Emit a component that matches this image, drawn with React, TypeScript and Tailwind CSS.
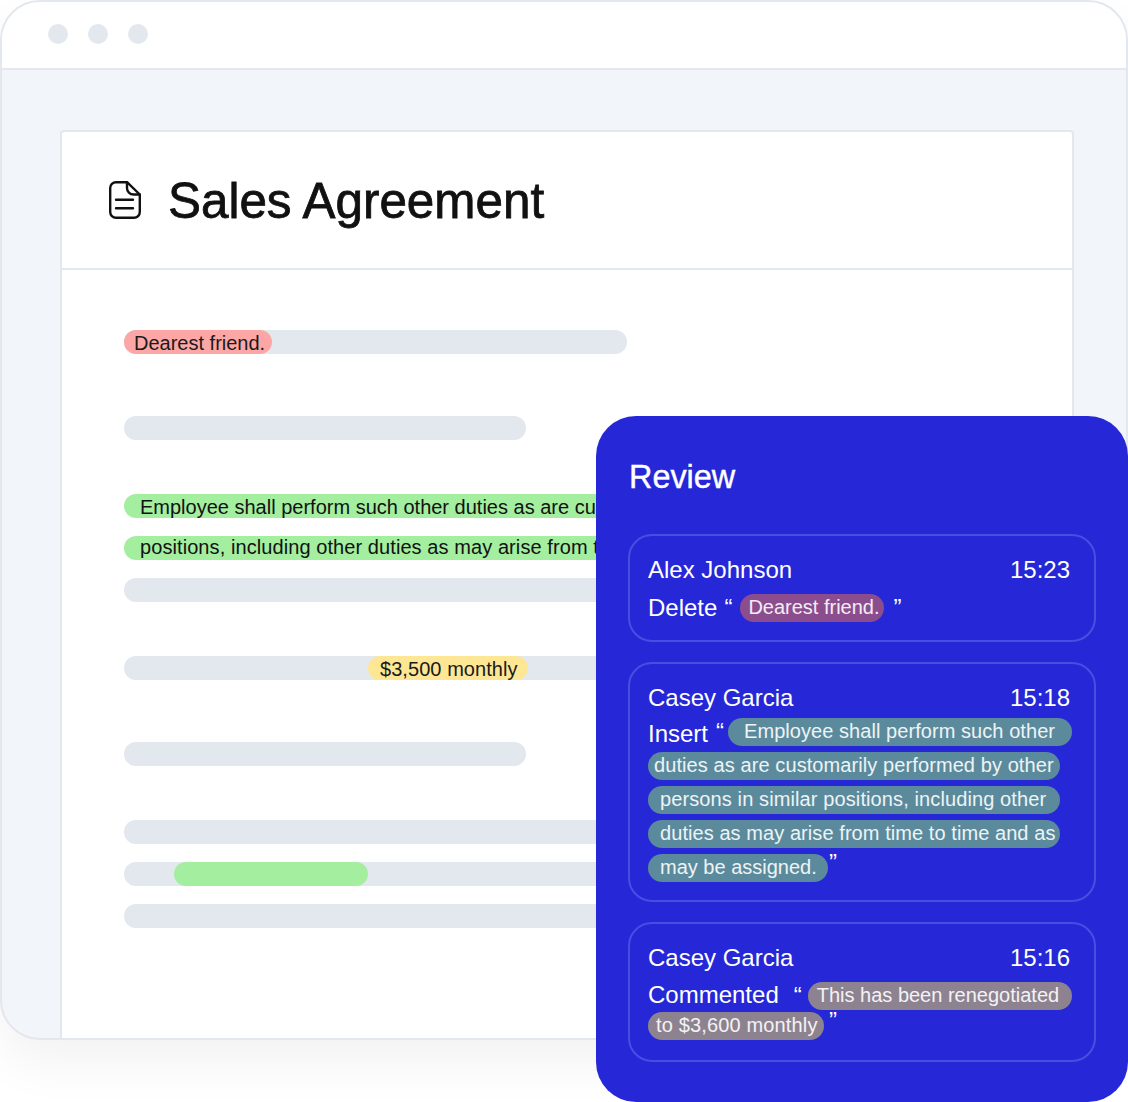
const font = "font-['Liberation_Sans',Arial,sans-serif]";

const DocIcon = () => (
  <svg width="32" height="38" viewBox="0 0 32 38" fill="none" stroke="#111111" strokeWidth="2.4" strokeLinejoin="round" strokeLinecap="round">
    <path d="M18 1.2H7A5.8 5.8 0 0 0 1.2 7V31A5.8 5.8 0 0 0 7 36.8H25A5.8 5.8 0 0 0 30.8 31V13.5L18 1.2Z" />
    <path d="M18 1.2V7A6.5 6.5 0 0 0 24.5 13.5H30.8" />
    <path d="M7 18.7H24M7 27.3H24" />
  </svg>
);

const Bar = ({ className = "", children }: { className?: string; children?: React.ReactNode }) => (
  <div className={`h-6 rounded-full bg-[#e3e7ee] flex ${className}`}>{children}</div>
);

const GreenLine = ({ className, text }: { className: string; text: string }) => (
  <div className={`h-6 rounded-full bg-[#a4ee9f] pl-4 text-[20px] text-[#111111] whitespace-nowrap overflow-hidden ${className}`}>
    {text}
  </div>
);

const Pill = ({ className, children }: { className: string; children: React.ReactNode }) => (
  <div className={`h-7 rounded-full text-[20px] leading-[26px] text-white/90 whitespace-nowrap shrink-0 ${className}`}>{children}</div>
);

const CardHead = ({ name, time }: { name: string; time: string }) => (
  <div className="flex justify-between pr-[6px] text-[24px] leading-7 text-white">
    <span>{name}</span>
    <span>{time}</span>
  </div>
);

const Card = ({ className = "pb-[18px]", children }: { className?: string; children: React.ReactNode }) => (
  <div className={`rounded-[24px] border-2 border-[#4a4ee0] px-[18px] pt-5 ${className}`}>{children}</div>
);

export default function App() {
  return (
    <div className={`relative h-[1102px] w-[1128px] overflow-hidden bg-white ${font}`}>
      <div className="flex h-[1040px] flex-col overflow-hidden rounded-[40px] border-2 border-[#e3e7ee] bg-[#f2f6fa] shadow-[0_24px_50px_rgba(0,0,0,0.05)]">
        <div className="flex h-[68px] shrink-0 items-center gap-5 border-b-2 border-[#e3e7ee] bg-white pl-[46px] pb-[2px]">
          <span className="h-5 w-5 rounded-full bg-[#e3e7ee]" />
          <span className="h-5 w-5 rounded-full bg-[#e3e7ee]" />
          <span className="h-5 w-5 rounded-full bg-[#e3e7ee]" />
        </div>
        <div className="flex-1 pl-[58px] pr-[52px] pt-[60px]">
          <div className="h-[1000px] rounded-[4px] border-2 border-[#e3e7ee] bg-white">
            <div className="flex h-[138px] items-center gap-[27px] border-b-2 border-[#e3e7ee] pl-[47px]">
              <DocIcon />
              <h1 className="pt-[2px] text-[49.4px] leading-[56px] text-[#111111] [-webkit-text-stroke:0.8px_#111111]">Sales Agreement</h1>
            </div>
            <div className="px-[62px] pt-[60px]">
              <Bar className="w-[503px]">
                <div className="h-6 w-[148px] rounded-full bg-[#fda6a6] pl-[10px] pt-[1px] text-[20px] leading-6 text-[#1a1a1a]">Dearest friend.</div>
              </Bar>
              <Bar className="mt-[62px] w-[402px]" />
              <div className="mt-[54px] flex flex-col gap-[18px]">
                <GreenLine className="pt-[1px] leading-6" text="Employee shall perform such other duties as are cu" />
                <GreenLine className="leading-[22px] tracking-[0.08px]" text="positions, including other duties as may arise from t" />
                <Bar />
              </div>
              <Bar className="mt-[54px]">
                <div className="ml-[244px] h-6 w-[160px] rounded-full bg-[#fde795] pl-3 pt-[1px] text-[20px] leading-6 tracking-[0.06px] text-[#1a1a1a]">$3,500 monthly</div>
              </Bar>
              <Bar className="mt-[62px] w-[402px]" />
              <div className="mt-[54px] flex flex-col gap-[18px]">
                <Bar />
                <Bar>
                  <div className="ml-[50px] h-6 w-[194px] rounded-full bg-[#a4ee9f]" />
                </Bar>
                <Bar />
              </div>
            </div>
          </div>
        </div>
      </div>

      <div className="absolute left-[596px] top-[416px] h-[686px] w-[532px] rounded-[40px] bg-[#2628d8] px-8 pt-[41px]">
        <h2 className="mb-[37px] pl-[1px] text-[32.4px] leading-10 text-white [-webkit-text-stroke:0.4px_#ffffff]">Review</h2>
        <div className="flex flex-col gap-5">
          <Card>
            <CardHead name="Alex Johnson" time="15:23" />
            <div className="mt-[10px] flex items-center text-[24px] leading-7 text-white">
              <span>Delete</span>
              <span className="ml-[7px] w-4">“</span>
              <Pill className="w-[144px] bg-[#8b4d8e] pl-2">Dearest friend.</Pill>
              <span className="ml-[9px]">”</span>
            </div>
          </Card>
          <Card>
            <CardHead name="Casey Garcia" time="15:18" />
            <div className="mt-[6px] flex flex-col gap-[6px]">
              <div className="flex items-center text-[24px] leading-7 text-white">
                <span className="relative top-[2px]">Insert</span>
                <span className="ml-[8px] w-3">“</span>
                <Pill className="w-[344px] bg-[#5a8a9c] pl-4 tracking-[0.06px]">Employee shall perform such other</Pill>
              </div>
              <Pill className="w-[412px] bg-[#5a8a9c] pl-[6px] tracking-[0.09px]">duties as are customarily performed by other</Pill>
              <Pill className="w-[412px] bg-[#5a8a9c] pl-3 tracking-[0.11px]">persons in similar positions, including other</Pill>
              <Pill className="w-[412px] bg-[#5a8a9c] pl-3 tracking-[0.07px]">duties as may arise from time to time and as</Pill>
              <div className="flex text-[24px] leading-7 text-white">
                <Pill className="w-[180px] bg-[#5a8a9c] pl-3">may be assigned.</Pill>
                <span className="relative -top-[5px] ml-[1px]">”</span>
              </div>
            </div>
          </Card>
          <Card className="pb-5">
            <CardHead name="Casey Garcia" time="15:16" />
            <div className="mt-[10px] flex flex-col gap-[2px]">
              <div className="flex items-center text-[24px] leading-7 text-white">
                <span className="relative -top-[1px]">Commented</span>
                <span className="ml-[15px] w-[14px]">“</span>
                <Pill className="w-[264px] bg-[#8d8290] pl-[9px]">This has been renegotiated</Pill>
              </div>
              <div className="flex text-[24px] leading-7 text-white">
                <Pill className="w-[176px] bg-[#8d8290] pl-2 tracking-[0.15px]">to $3,600 monthly</Pill>
                <span className="relative -top-[5px] ml-[5px]">”</span>
              </div>
            </div>
          </Card>
        </div>
      </div>
    </div>
  );
}
